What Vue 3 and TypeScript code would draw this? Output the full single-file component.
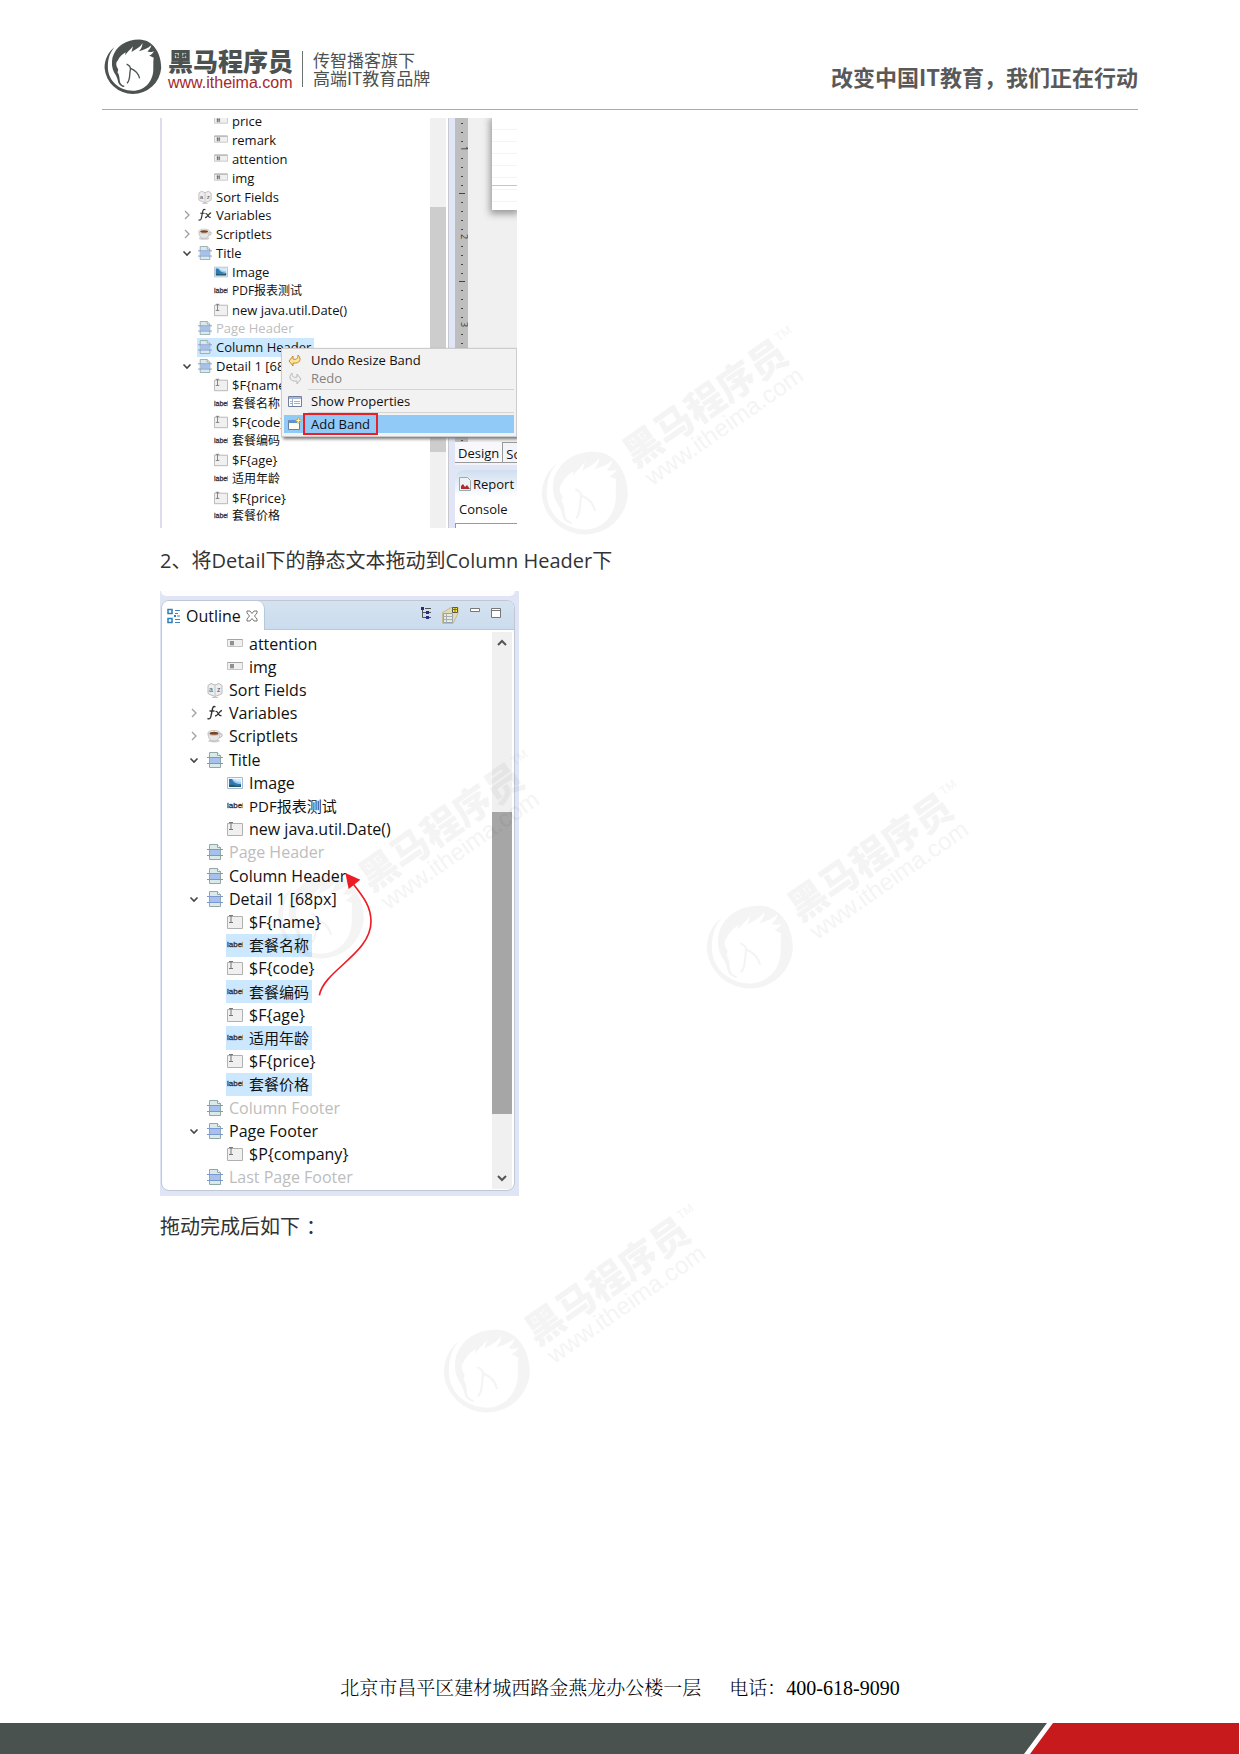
<script setup lang="ts">
interface TreeRow {
  label: string
  icon: string
  level: 1 | 2
  toggle?: 'open' | 'closed'
  muted?: boolean
  selected?: boolean
}

const row = (label: string, icon: string, level: 1 | 2, extra: Partial<TreeRow> = {}): TreeRow => ({
  label,
  icon,
  level,
  ...extra,
})

const isCjk = (label: string): boolean => /[\u4e00-\u9fff]/.test(label)

const firstTree: TreeRow[] = [
  row('price', 'field', 2),
  row('remark', 'field', 2),
  row('attention', 'field', 2),
  row('img', 'field', 2),
  row('Sort Fields', 'sort', 1),
  row('Variables', 'fx', 1, { toggle: 'closed' }),
  row('Scriptlets', 'cup', 1, { toggle: 'closed' }),
  row('Title', 'band', 1, { toggle: 'open' }),
  row('Image', 'image', 2),
  row('PDF报表测试', 'label', 2),
  row('new java.util.Date()', 'text', 2),
  row('Page Header', 'band', 1, { muted: true }),
  row('Column Header', 'band', 1, { selected: true }),
  row('Detail 1 [68px]', 'band', 1, { toggle: 'open' }),
  row('$F{name}', 'text', 2),
  row('套餐名称', 'label', 2),
  row('$F{code}', 'text', 2),
  row('套餐编码', 'label', 2),
  row('$F{age}', 'text', 2),
  row('适用年龄', 'label', 2),
  row('$F{price}', 'text', 2),
  row('套餐价格', 'label', 2),
]

const secondTree: TreeRow[] = [
  row('attention', 'field', 2),
  row('img', 'field', 2),
  row('Sort Fields', 'sort', 1),
  row('Variables', 'fx', 1, { toggle: 'closed' }),
  row('Scriptlets', 'cup', 1, { toggle: 'closed' }),
  row('Title', 'band', 1, { toggle: 'open' }),
  row('Image', 'image', 2),
  row('PDF报表测试', 'label', 2),
  row('new java.util.Date()', 'text', 2),
  row('Page Header', 'band', 1, { muted: true }),
  row('Column Header', 'band', 1),
  row('Detail 1 [68px]', 'band', 1, { toggle: 'open' }),
  row('$F{name}', 'text', 2),
  row('套餐名称', 'label', 2, { selected: true }),
  row('$F{code}', 'text', 2),
  row('套餐编码', 'label', 2, { selected: true }),
  row('$F{age}', 'text', 2),
  row('适用年龄', 'label', 2, { selected: true }),
  row('$F{price}', 'text', 2),
  row('套餐价格', 'label', 2, { selected: true }),
  row('Column Footer', 'band', 1, { muted: true }),
  row('Page Footer', 'band', 1, { toggle: 'open' }),
  row('$P{company}', 'text', 2),
  row('Last Page Footer', 'band', 1, { muted: true }),
]

const trees = { first: firstTree, second: secondTree }

// Ruler: ten steps to a unit, a long tick at the half unit, the number at the full one.
const ticks = Array.from({ length: 37 }, (_, i) => {
  const step = i + 7
  return { y: Math.round(5 + i * 8.8), long: step % 10 === 5, unit: step % 10 === 0 ? step / 10 : 0 }
})

// Centres of the emblem in each watermark.
const watermarks = [
  { x: 585, y: 493 },
  { x: 321, y: 917 },
  { x: 750, y: 947 },
  { x: 487, y: 1371 },
]
</script>

<template>
  <svg class="sprite" aria-hidden="true">
    <symbol id="emblem" viewBox="66 419 262 263">
      <path
        fill="currentColor"
        d="M112 457C84 478 68 512 68 551A129 129 0 0 0 325 551C325 478 285 422 225 421C165 421 120 450 104 503C99 528 101 552 112 572C126 592 128 606 131 618C136 629 146 635 157 637L158 631C146 629 138 620 137 607C135 590 134 578 127 571L130 556C122 545 116 527 128 516C136 500 150 486 164 479L160 493C172 478 184 468 197 452L190 478C210 464 230 458 240 437C240 452 234 464 224 474C244 468 262 462 280 447C276 462 270 468 262 476C272 480 282 478 292 474C286 484 280 490 270 494L291 504C288 520 290 530 289 548C292 606 254 653 196 654C130 652 82 604 83 545C83 506 92 482 112 457Z"
      />
      <path d="M168 533C180 538 187 546 185 558C180 580 186 604 170 620M186 552C206 560 222 576 227 598" fill="none" stroke="currentColor" stroke-width="6" />
    </symbol>
    <symbol id="i-field" viewBox="0 0 16 16">
      <path d="M.5 3.500h15v7H.5z" fill="#f0f0f0" stroke="#c4c4c4" />
      <path d="M.5 3.500h15" stroke="#a4a4a4" />
      <path d="M3 6h4M3 8h4M4 5v4.500M6 5v4.500" stroke="#666" stroke-width=".9" />
    </symbol>
    <symbol id="i-sort" viewBox="0 0 16 16">
      <path d="M1 3.500L4 1.500 8 3l4-1.500 3 2v8L12 13l-4 1.500L4 13l-3-1.500z" fill="#eee" stroke="#bbb" />
      <path d="M8 3v11M5 15.500h6" stroke="#c4c4c4" />
    </symbol>
    <symbol id="i-label" viewBox="0 0 16 16"></symbol>
    <symbol id="i-fx" viewBox="0 0 16 16">
      <path d="M8.500 2C6 .5 5.500 3 5 6L4 11c-.4 2.500-1.500 3.500-3.500 2.500M2.500 6h5" fill="none" stroke="#333" stroke-width="1.400" />
      <path d="M8.500 6.500C11 5 11 12 14.500 10.500M15 5.500C12.500 5.500 11 11 8 11" fill="none" stroke="#333" stroke-width="1.300" />
    </symbol>
    <symbol id="i-cup" viewBox="0 0 16 16">
      <ellipse cx="7" cy="13" rx="6" ry="1.500" fill="#d0d0d0" />
      <path d="M1 5c0 5 2 8 6 8s6-3 6-8z" fill="#e6e6e6" stroke="#b5b5b5" stroke-width=".8" />
      <path d="M13 6c3-.8 3 3-1 3.500" fill="none" stroke="#bbb" stroke-width="1.200" />
      <ellipse cx="7" cy="5" rx="6" ry="2.500" fill="#f2f2f2" stroke="#bbb" stroke-width=".8" />
      <ellipse cx="7" cy="5.200" rx="4.500" ry="1.500" fill="#7a4423" />
    </symbol>
    <symbol id="i-band" viewBox="0 0 16 16">
      <path d="M2.500.5h8l3 3v12h-11z" fill="#dce9ea" stroke="#8fa8a8" />
      <path d="M10.500.5v3h3" fill="#fff" stroke="#8fa8a8" />
      <path d="M3 6h10v5H3z" fill="#a8c0ec" />
      <path d="M0 5.500h16M0 11.500h16" stroke="#7b97cf" />
    </symbol>
    <symbol id="i-image" viewBox="0 0 16 16">
      <path d="M.5 2.500h15v11H.5z" fill="#f5f9fd" stroke="#a9bccd" />
      <path d="M2 4h12v8H2z" fill="#9ccdf0" />
      <path d="M2 4h3c1 3 4 5 9 5v1H2z" fill="#2f78b8" />
      <path d="M2 10c3-1 7 1 12 0v2H2z" fill="#245a60" />
      <path d="M6 4h8v3C10 7 8 6 6 4z" fill="#d4eafa" />
    </symbol>
    <symbol id="i-text" viewBox="0 0 16 16">
      <path d="M.5 2.500h15v12H.5z" fill="#f0f0f0" stroke="#b0b0b0" />
      <path d="M2 1.500h4M4 1.500v7M2 8.500h4" fill="none" stroke="#777" />
    </symbol>
    <symbol id="i-open" viewBox="0 0 12 12">
      <path d="M2.500 4.500l3.500 3.500 3.500-3.500" fill="none" stroke="#444" stroke-width="1.600" />
    </symbol>
    <symbol id="i-closed" viewBox="0 0 12 12">
      <path d="M4 2l4 4-4 4" fill="none" stroke="#a0a0a0" stroke-width="1.300" />
    </symbol>
  </svg>

  <div class="page">
    <header class="masthead">
      <div class="brand">
        <svg class="emblem"><use href="#emblem" /></svg>
        <div class="names">
          <strong class="name">黑马程序员</strong>
          <a class="site" href="#">www.itheima.com</a>
        </div>
        <p class="slogan">传智播客旗下<br />高端IT教育品牌</p>
      </div>
      <p class="tagline">改变中国IT教育，我们正在行动</p>
    </header>

    <main class="content">
      <section class="shot shot-first">
        <ul class="tree tree-small">
          <li v-for="item in trees.first" :key="item.label" class="row" :class="['level-' + item.level, { muted: item.muted }]">
            <span class="toggle"><svg v-if="item.toggle"><use :href="'#i-' + item.toggle" /></svg></span>
            <span class="item" :class="{ selected: item.selected, cjk: isCjk(item.label) }">
              <svg class="icon" viewBox="0 0 16 16">
                <use :href="'#i-' + item.icon" />
                <text v-if="item.icon === 'label'" x="0" y="10" class="glyph-label">label</text>
                <text v-if="item.icon === 'sort'" x="2" y="10" class="glyph-sort">a</text>
                <text v-if="item.icon === 'sort'" x="10" y="10" class="glyph-sort">z</text>
              </svg>{{ item.label }}
            </span>
          </li>
        </ul>
        <div class="track track-first"><div class="thumb"></div></div>
        <div class="editor">
          <div class="canvas">
            <svg class="ruler" width="13" height="325">
              <template v-for="tick in ticks" :key="tick.y">
                <text v-if="tick.unit" :transform="`translate(6 ${tick.y - 3}) rotate(90)`" class="unit">{{ tick.unit }}</text>
                <rect v-else :x="tick.long ? 4 : 6" :y="tick.y" :width="tick.long ? 6 : 2" height="1" fill="#444" />
              </template>
            </svg>
            <div class="sheet"></div>
          </div>
          <div class="modes">
            <button class="mode active" type="button">Design</button>
            <button class="mode" type="button">Source</button>
          </div>
          <div class="report">
            <button class="report-tab" type="button">
              <svg class="icon" viewBox="0 0 12 14">
                <path d="M.5.5h8l3 3v10H.5z" fill="#eef3f6" stroke="#9aa" />
                <path d="M2 12V9l2-2 2 3 2-2 3 4z" fill="#b02a30" />
              </svg>Report
            </button>
            <p class="console">Console</p>
            <div class="output"></div>
          </div>
        </div>
        <div class="menu" role="menu">
          <button class="menu-item" role="menuitem" type="button">
            <svg class="icon" viewBox="0 0 14 14"><path d="M1 8l4-5v3c3 1 5 0 5-4 4 4 2 9-5 8v3z" fill="#fbe3a4" stroke="#c98a1c" /></svg>Undo Resize Band
          </button>
          <button class="menu-item off" role="menuitem" type="button" disabled>
            <svg class="icon" viewBox="0 0 14 14"><path d="M13 8L9 3v3C6 7 4 6 4 2 0 6 2 11 9 10v3z" fill="#eee" stroke="#bbb" /></svg>Redo
          </button>
          <hr />
          <button class="menu-item" role="menuitem" type="button">
            <svg class="icon" viewBox="0 0 14 14">
              <path d="M.5 2.500h13v10H.5z" fill="#fff" stroke="#6f7f9f" /><path d="M1 3h12v2H1z" fill="#a9b6d2" />
              <path d="M2 7.500h2M2 9.500h2M6 7.500h6M6 9.500h6M4.500 5v7" stroke="#9fb0cc" />
            </svg>Show Properties
          </button>
          <hr />
          <button class="menu-item active" role="menuitem" type="button">
            <svg class="icon" viewBox="0 0 14 14">
              <path d="M.5 3.500h11v9H.5z" fill="#fdfdf2" stroke="#6b7f9b" /><path d="M1 3h8v3H1z" fill="#5d93d1" />
              <path d="M10.500.5v6M7.500 3.500h6" stroke="#d9a520" stroke-width="2" /><path d="M10.500 1.500v4M8.500 3.500h4" stroke="#fff3b0" />
            </svg><span class="boxed">Add Band</span>
          </button>
        </div>
      </section>

      <p class="para">2、将Detail下的静态文本拖动到Column Header下</p>

      <section class="shot shot-second">
        <div class="above"></div>
        <div class="panel">
          <div class="tabs">
            <button class="tab" type="button">
              <svg width="14" height="16" viewBox="0 0 14 16">
                <path d="M1 1.500h4v4H1zM1 10.500h4v4H1z" fill="#fff" stroke="#2c7fb8" stroke-width="1.500" />
                <path d="M8 2.500h5M8 5.500h3M8 11.500h5M8 14.500h5M10 8h3" stroke="#3c88bb" /><path d="M7 7h2v2H7z" fill="#2c7fb8" />
              </svg>
              Outline
              <svg width="12" height="12" viewBox="0 0 12 12">
                <path d="M1 1h3l2 2.500L8 1h3v2L8.500 6 11 9v2H8L6 8.500 4 11H1V9l2.500-3L1 3z" fill="#fff" stroke="#777" />
              </svg>
            </button>
            <div class="tools">
              <button type="button" aria-label="Tree view">
                <svg width="10" height="12" viewBox="0 0 10 12">
                  <path d="M1.500 1v9.500H6M1.500 5.500H6M4 1.500h6M8 5.500h2M8 10.500h2" fill="none" stroke="#555" />
                  <path d="M0 0h3v3H0zM5 4h3v3H5zM5 9h3v3H5z" fill="#2b2b80" />
                </svg>
              </button>
              <button type="button" aria-label="Preview">
                <svg width="17" height="17" viewBox="0 0 17 17">
                  <path d="M.5 5.500L9 .5h7v6l-5 10H.5z" fill="#e2dab2" stroke="#c5bc92" />
                  <path d="M1.500 6.500h9v9h-9z" fill="#e8ecdc" stroke="#98a2ae" />
                  <path d="M1.500 9.500h9M1.500 12.500h9M4.500 6.500v9" stroke="#a6afb8" />
                  <path d="M10.500.5h5v5h-5z" fill="#ffe92e" stroke="#555" />
                  <path d="M10.500 2.500h5M13 .5v5" stroke="#7a7420" />
                </svg>
              </button>
              <button type="button" aria-label="Minimize">
                <svg width="10" height="12" viewBox="0 0 10 12"><path d="M.5 1.500h9v3h-9z" fill="#fff" stroke="#777" /></svg>
              </button>
              <button type="button" aria-label="Maximize">
                <svg width="10" height="12" viewBox="0 0 10 12"><path d="M.5 1.500h9v9h-9zM.5 3.500h9" fill="#fff" stroke="#777" /></svg>
              </button>
            </div>
          </div>
          <div class="panel-body">
            <ul class="tree tree-large">
              <li v-for="item in trees.second" :key="item.label" class="row" :class="['level-' + item.level, { muted: item.muted }]">
                <span class="toggle"><svg v-if="item.toggle"><use :href="'#i-' + item.toggle" /></svg></span>
                <span class="item" :class="{ selected: item.selected, cjk: isCjk(item.label) }">
                  <svg class="icon" viewBox="0 0 16 16">
                    <use :href="'#i-' + item.icon" />
                    <text v-if="item.icon === 'label'" x="0" y="10" class="glyph-label">label</text>
                    <text v-if="item.icon === 'sort'" x="2" y="10" class="glyph-sort">a</text>
                    <text v-if="item.icon === 'sort'" x="10" y="10" class="glyph-sort">z</text>
                  </svg>{{ item.label }}
                </span>
              </li>
            </ul>
            <div class="track track-second">
              <svg width="12" height="12" viewBox="0 0 12 12"><path d="M2 8l4-4 4 4" fill="none" stroke="#555" stroke-width="2" /></svg>
              <div class="thumb"></div>
              <svg width="12" height="12" viewBox="0 0 12 12"><path d="M2 4l4 4 4-4" fill="none" stroke="#555" stroke-width="2" /></svg>
            </div>
          </div>
        </div>
        <svg class="arrow" width="56" height="126" viewBox="500 245 168 378">
          <path d="M507 615C520 540 663 490 662 393C662 350 640 320 608 280" fill="none" stroke="#ed1c24" stroke-width="5" />
          <path d="M585 248l45 20-35 28z" fill="#ed1c24" />
        </svg>
      </section>

      <p class="para">拖动完成后如下<span class="colon">：</span></p>
    </main>

    <footer>
      <p class="address"><span>北京市昌平区建材城西路金燕龙办公楼一层</span><span>电话：<span class="phone">400-618-9090</span></span></p>
      <div class="bars">
        <div class="bar-dark"></div>
        <div class="bar-red"></div>
      </div>
    </footer>

    <div class="watermarks" aria-hidden="true">
      <svg
        v-for="mark in watermarks"
        :key="mark.y"
        class="watermark"
        width="290"
        height="265"
        viewBox="-45 -215 290 265"
        :style="{ left: mark.x - 45 + 'px', top: mark.y - 215 + 'px' }"
      >
        <use href="#emblem" x="-44" y="-42" width="88" height="88" />
        <g transform="rotate(-35)" fill="currentColor">
          <text x="55" y="9" class="mark-name">黑马程序员</text>
          <text x="59" y="33" class="mark-site">www.itheima.com</text>
          <text x="245" y="-13" class="mark-tm">TM</text>
        </g>
      </svg>
    </div>
  </div>
</template>

<style>
body {
  margin: 0;
  background: #fff;
}
</style>

<style scoped>
.sprite {
  position: absolute;
  width: 0;
  height: 0;
}
.page {
  position: relative;
  display: flex;
  flex-direction: column;
  min-height: 100vh;
  overflow: hidden;
  font-family: 'Open Sans', 'Noto Sans CJK SC', sans-serif;
  color: #111;
}
p,
ul {
  margin: 0;
  padding: 0;
}
button {
  border: 0;
  padding: 0;
  background: none;
  font: inherit;
  color: inherit;
}
svg {
  flex: none;
}

.masthead {
  display: flex;
  justify-content: space-between;
  align-items: center;
  box-sizing: border-box;
  height: 110px;
  margin: 0 102px;
  padding: 26px 0 0 2px;
  border-bottom: 1px solid #aaa;
  color: #4b5250;
}
.brand {
  display: flex;
  align-items: center;
}
.emblem {
  width: 58px;
  height: 58px;
}
.names {
  display: flex;
  flex-direction: column;
  margin-left: 6px;
  padding-top: 4px;
}
.name {
  font-weight: 900;
  font-size: 25px;
  line-height: 27px;
}
.site {
  font: 16px/16px 'Liberation Sans', sans-serif;
  color: #a5282a;
  text-decoration: none;
}
.slogan {
  margin: 2px 0 0 9px;
  padding-left: 10px;
  border-left: 1px solid #6b7270;
  font-family: 'Noto Sans CJK SC', sans-serif;
  font-size: 17px;
  line-height: 18px;
}
.tagline {
  padding-top: 16px;
  font-family: 'Noto Sans CJK SC', sans-serif;
  font-weight: 700;
  font-size: 22px;
  line-height: 24px;
  color: #595959;
}

.content {
  flex: 1;
  padding: 8px 102px 0 160px;
}
.shot {
  position: relative;
}
.para {
  font-size: 20px;
  line-height: 28px;
  color: #333;
}
.colon {
  padding-left: 6px;
}

.tree {
  display: flex;
  flex: 1;
  flex-direction: column;
  list-style: none;
}
.row {
  display: flex;
  flex: 1;
  align-items: stretch;
  min-height: 0;
  white-space: nowrap;
}
.toggle {
  display: flex;
  align-items: center;
  justify-content: center;
}
.toggle svg {
  width: 12px;
  height: 12px;
}
.item {
  display: flex;
  align-items: center;
  padding: 0 3px 0 1px;
}
.selected {
  background: #cce8ff;
}
.muted {
  color: #bdbdbd;
}
.glyph-label {
  font: 8px 'Liberation Sans', sans-serif;
  fill: #333;
  stroke: #333;
  stroke-width: 0.3px;
}
.glyph-sort {
  font: 7px 'Liberation Sans', sans-serif;
  fill: #555;
}
.tree-small {
  height: 414px;
  margin-top: -6px;
  padding-left: 18px;
  font-size: 13px;
  line-height: 16px;
}
.tree-small .cjk {
  font-size: 12px;
}
.tree-small .toggle {
  width: 14px;
  margin-right: 3px;
}
.tree-small .icon {
  width: 14px;
  height: 14px;
  margin-right: 4px;
}
.tree-small .level-2 .toggle {
  width: 30px;
}
.tree-large {
  height: 557px;
  padding-left: 25px;
  font-size: 16px;
  line-height: 20px;
}
.tree-large .cjk {
  font-size: 15px;
}
.tree-large .toggle {
  width: 14px;
  margin-right: 5px;
}
.tree-large .icon {
  width: 16px;
  height: 16px;
  margin-right: 6px;
}
.tree-large .level-2 .toggle {
  width: 34px;
}

.shot-first {
  display: flex;
  box-sizing: border-box;
  width: 357px;
  height: 410px;
  margin-bottom: 19px;
  border-left: 2px solid #dcdcec;
  overflow: hidden;
}
.track {
  background: #f0f0f0;
}
.track-first {
  width: 16px;
  padding-top: 89px;
}
.track-first .thumb {
  height: 245px;
  background: #cdcdcd;
}
.editor {
  display: flex;
  flex-direction: column;
  width: 62px;
  margin-left: 2px;
  padding-left: 6px;
  border-left: 1px solid #c8c8d0;
  background: #e0e6f6;
  font-size: 13px;
  line-height: 18px;
}
.canvas {
  display: flex;
  justify-content: space-between;
  height: 325px;
  background: #f0f0f0;
  overflow: hidden;
}
.ruler {
  background: #bebebe;
}
.unit {
  font: 9px 'Open Sans', sans-serif;
  fill: #333;
}
.sheet {
  width: 25px;
  height: 92px;
  background: linear-gradient(#c4bcf4, #c4bcf4) 0 67px / 100% 1px no-repeat, repeating-linear-gradient(#fff 0 11px, #f4f4f4 11px 12px);
  box-shadow: 0 2px 7px 2px #999;
}
.modes {
  display: flex;
  height: 23px;
  background: #f3f4fa;
}
.mode {
  flex: none;
  box-sizing: border-box;
  height: 21px;
  padding: 2px 3px 0;
  border: 1px solid #999;
  border-left: 0;
}
.mode.active {
  border-top: 0;
  background: #f8f8fc;
}
.report {
  flex: 1;
  margin-top: 5px;
  border-top-left-radius: 8px;
  background: #fff;
}
.report-tab {
  display: flex;
  align-items: center;
  gap: 2px;
  width: 100%;
  height: 27px;
  padding-left: 4px;
  border-top-left-radius: 8px;
  background: linear-gradient(#d0def0, #fff);
}
.report-tab .icon {
  width: 12px;
  height: 14px;
}
.console {
  padding: 3px 4px 5px;
}
.output {
  height: 4px;
  border: 1px solid #999;
  border-width: 1px 0 0 1px;
}

.menu {
  position: absolute;
  top: 230px;
  left: 119px;
  box-sizing: border-box;
  width: 236px;
  padding: 2px 2px 3px;
  border: 1px solid #ccc;
  background: #f2f2f2;
  box-shadow: 2px 2px 3px #777;
  font-size: 13px;
  line-height: 18px;
}
.menu-item {
  display: flex;
  align-items: center;
  width: 100%;
  height: 18px;
  padding-left: 4px;
  text-align: left;
}
.menu-item .icon {
  width: 14px;
  height: 14px;
  margin-right: 9px;
}
.menu-item.off {
  color: #838383;
}
.menu-item.active {
  background: #91c9f7;
}
.boxed {
  margin-left: -7px;
  padding: 1px 7px;
  outline: 2px solid #e8202a;
  outline-offset: -1px;
}
.menu hr {
  height: 1px;
  margin: 2px 0 2px 24px;
  border: 0;
  background: #d4d4d4;
}

.shot-second {
  box-sizing: border-box;
  width: 359px;
  height: 605px;
  margin: 16px 0 17px;
  padding: 0 4px 0 1px;
  background: #dfe5f5;
}
.above {
  height: 5px;
  margin-bottom: 4px;
  border-radius: 0 0 8px 8px;
  background: #fdfdff;
}
.panel {
  border: 1px solid #bfc7d4;
  border-radius: 8px;
  background: #fff;
  overflow: hidden;
}
.tabs {
  display: flex;
  justify-content: space-between;
  height: 28px;
  border-bottom: 1px solid #b4c8de;
  background: linear-gradient(#d5e2f0, #cbdcee);
}
.tab {
  display: flex;
  align-items: center;
  gap: 5px;
  height: 29px;
  padding: 1px 6px 0 5px;
  border-right: 1px solid #b4c8de;
  border-top-right-radius: 8px;
  background: #fff;
  font-size: 16px;
}
.tools {
  display: flex;
  align-items: flex-start;
  gap: 11px;
  padding: 6px 13px 0 0;
}
.tools svg {
  display: block;
}
.panel-body {
  display: flex;
  padding: 2px 2px 1px 0;
}
.track-second {
  display: flex;
  flex-direction: column;
  align-items: center;
  justify-content: space-between;
  box-sizing: border-box;
  width: 20px;
  padding: 5px 0;
}
.track-second .thumb {
  width: 100%;
  height: 302px;
  margin-top: 105px;
  background: #a6a6a6;
}
.arrow {
  position: absolute;
  left: 157px;
  top: 281px;
}

.address {
  display: flex;
  justify-content: center;
  gap: 28px;
  padding-bottom: 22px;
  font-family: 'Noto Serif CJK SC', 'Noto Sans CJK SC', serif;
  font-weight: 300;
  font-size: 19px;
  line-height: 26px;
  color: #000;
}
.phone {
  font-family: 'Liberation Serif', serif;
  font-size: 20px;
}
.bars {
  display: flex;
  height: 31px;
}
.bar-dark {
  flex: 1;
  background: #4a5250;
  clip-path: polygon(0 0, 100% 0, calc(100% - 23px) 100%, 0 100%);
}
.bar-red {
  width: 209px;
  margin-left: -17px;
  margin-right: 1px;
  background: #c61a1c;
  clip-path: polygon(23px 0, 100% 0, 100% 100%, 0 100%);
}

.watermarks {
  position: absolute;
  inset: 0;
  pointer-events: none;
}
.watermark {
  position: absolute;
  color: #000;
  opacity: 0.04;
}
.mark-name {
  font: 900 38px 'Noto Sans CJK SC', sans-serif;
}
.mark-site {
  font: 24px 'Liberation Sans', sans-serif;
}
.mark-tm {
  font: 12px 'Liberation Sans', sans-serif;
}
</style>
